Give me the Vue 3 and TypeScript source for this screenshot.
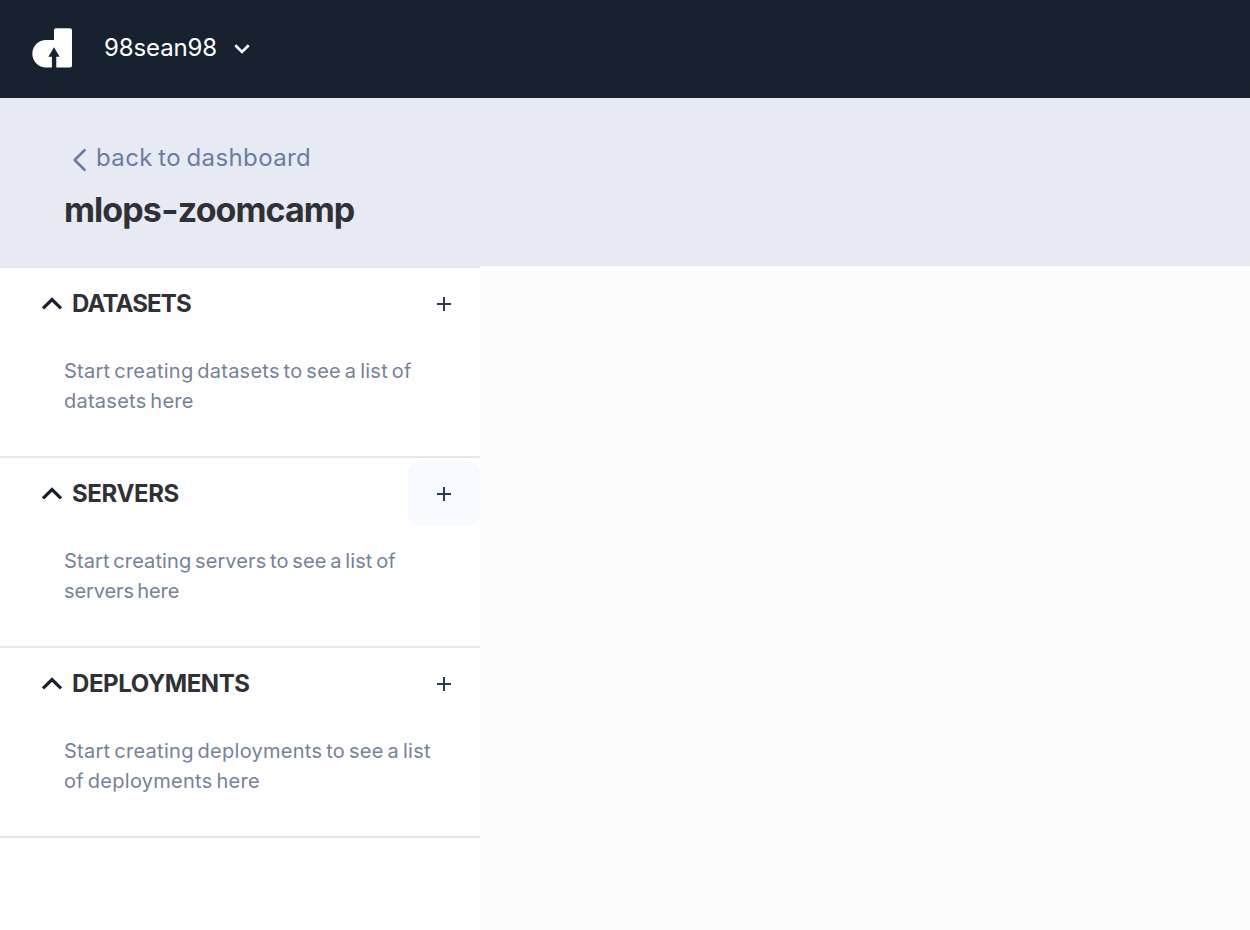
<script setup lang="ts">
interface Section {
  id: string
  title: string
  lines: string[]
  active: boolean
}

const sections: Section[] = [
  { id: 'datasets', title: 'DATASETS', lines: ['Start creating datasets to see a list of', 'datasets here'], active: false },
  { id: 'servers', title: 'SERVERS', lines: ['Start creating servers to see a list of', 'servers here'], active: true },
  { id: 'deployments', title: 'DEPLOYMENTS', lines: ['Start creating deployments to see a list', 'of deployments here'], active: false },
]
</script>

<template>
  <div class="page">
    <nav class="topbar">
      <svg class="logo" width="40" height="40" viewBox="0 0 40 40">
        <path fill="#fff" d="M24 0.300H38Q40 0.300 40 2.300V37.500Q40 39.500 38 39.500H24.300V28.700H27.600L22 19.200L16.400 28.700H19.900V39.500H14A13.700 13.700 0 0 1 14 12.100H22V2.300Q22 0.300 24 0.300Z" />
      </svg>
      <span class="user">98sean98</span>
      <svg class="caret" width="20" height="20" viewBox="0 0 20 20">
        <path d="M3.300 6.300L10 12.900L16.700 6.300" fill="none" stroke="#fff" stroke-width="2.700" />
      </svg>
    </nav>
    <header class="header">
      <a class="back">
        <svg class="chevron" width="16" height="24" viewBox="0 0 16 24">
          <path d="M13.500 2.200L3.700 12L13.500 21.800" fill="none" stroke="#6b7da7" stroke-width="2.700" stroke-linecap="round" stroke-linejoin="round" />
        </svg>
        <span class="back-label">back to dashboard</span>
      </a>
      <h1 class="title">mlops<span class="dash">-</span>zoomcamp</h1>
    </header>
    <div class="body">
      <aside class="sidebar">
        <section v-for="s in sections" :key="s.id" class="section">
          <div class="section-head">
            <svg class="fold" width="24" height="20" viewBox="0 0 24 20">
              <path d="M3 14.400L12 5.500L21 14.400" fill="none" stroke="#18202f" stroke-width="3.200" />
            </svg>
            <h2 class="section-title" :class="s.id">{{ s.title }}</h2>
            <button class="add" :class="{ active: s.active }" type="button">
              <svg width="14" height="14" viewBox="0 0 14 14">
                <path d="M7 0V14M0 7H14" fill="none" stroke="#2d3b50" stroke-width="2" />
              </svg>
            </button>
          </div>
          <p class="hint" :class="s.id">
            <span v-for="line in s.lines" :key="line" class="line">{{ line }}</span>
          </p>
        </section>
      </aside>
      <main class="content"></main>
    </div>
  </div>
</template>

<style>
body {
  margin: 0;
  background: #fcfcfc;
}
</style>

<style scoped>
.page {
  width: 100%;
  height: 930px;
  display: flex;
  flex-direction: column;
  overflow: hidden;
  font-family: Inter, "Open Sans", sans-serif;
}
.topbar {
  box-sizing: border-box;
  flex: 0 0 98px;
  display: flex;
  align-items: center;
  padding: 0 32px 2px;
  background: #18212f;
  color: #fff;
}
.logo {
  flex: none;
}
.user {
  width: 112px;
  margin-left: 32px;
  font-size: 24px;
  line-height: 36px;
  letter-spacing: -0.12px;
  white-space: nowrap;
}
.caret {
  margin: 2px 0 0 16px;
}
.header {
  box-sizing: border-box;
  flex: 0 0 168px;
  padding: 42px 64px 0;
  background: #e7eaf2;
}
.back {
  display: flex;
  height: 36px;
  padding-left: 7px;
  color: #6b7da7;
}
.chevron {
  margin-top: 8px;
}
.back-label {
  margin-left: 9px;
  font-size: 24px;
  line-height: 36px;
  letter-spacing: 0.37px;
  word-spacing: -1.6px;
  white-space: nowrap;
}
.title {
  margin: 9px 0 0;
  color: #303136;
  font-size: 34px;
  font-weight: 700;
  line-height: 50px;
  letter-spacing: -0.95px;
  white-space: nowrap;
}
.dash {
  display: inline-block;
  margin: 0 1px;
  transform: scaleX(1.12);
}
.body {
  flex: 1;
  display: flex;
}
.sidebar {
  width: 480px;
  background: #fff;
}
.section {
  box-sizing: border-box;
  height: 190px;
  border-top: 2px solid #e2e6ee;
}
.section:last-child {
  height: 192px;
  border-bottom: 2px solid #e2e6ee;
}
.section-head {
  display: flex;
  align-items: center;
  height: 72px;
  padding-left: 40px;
}
.section-title {
  flex: 1;
  margin: 0 0 0 8px;
  color: #303136;
  font-size: 24px;
  font-weight: 700;
  line-height: 36px;
}
.section-title.datasets {
  letter-spacing: -0.85px;
}
.section-title.servers {
  letter-spacing: -0.37px;
}
.section-title.deployments {
  letter-spacing: -0.43px;
}
.add {
  display: flex;
  align-items: center;
  justify-content: center;
  width: 72px;
  height: 64px;
  padding: 0;
  border: 0;
  border-radius: 12px;
  background: transparent;
}
.add.active {
  background: #f7fafe;
}
.hint {
  margin: 16px 0 0 64px;
  color: #758299;
  font-size: 20px;
  line-height: 30px;
  word-spacing: -2px;
}
.hint.datasets {
  letter-spacing: 0.25px;
}
.hint.servers {
  letter-spacing: 0.1px;
}
.hint.servers .line:last-child {
  letter-spacing: -0.12px;
}
.hint.deployments {
  letter-spacing: 0.27px;
}
.line {
  display: block;
  white-space: nowrap;
}
.content {
  flex: 1;
  background: #fcfcfc;
}
</style>
